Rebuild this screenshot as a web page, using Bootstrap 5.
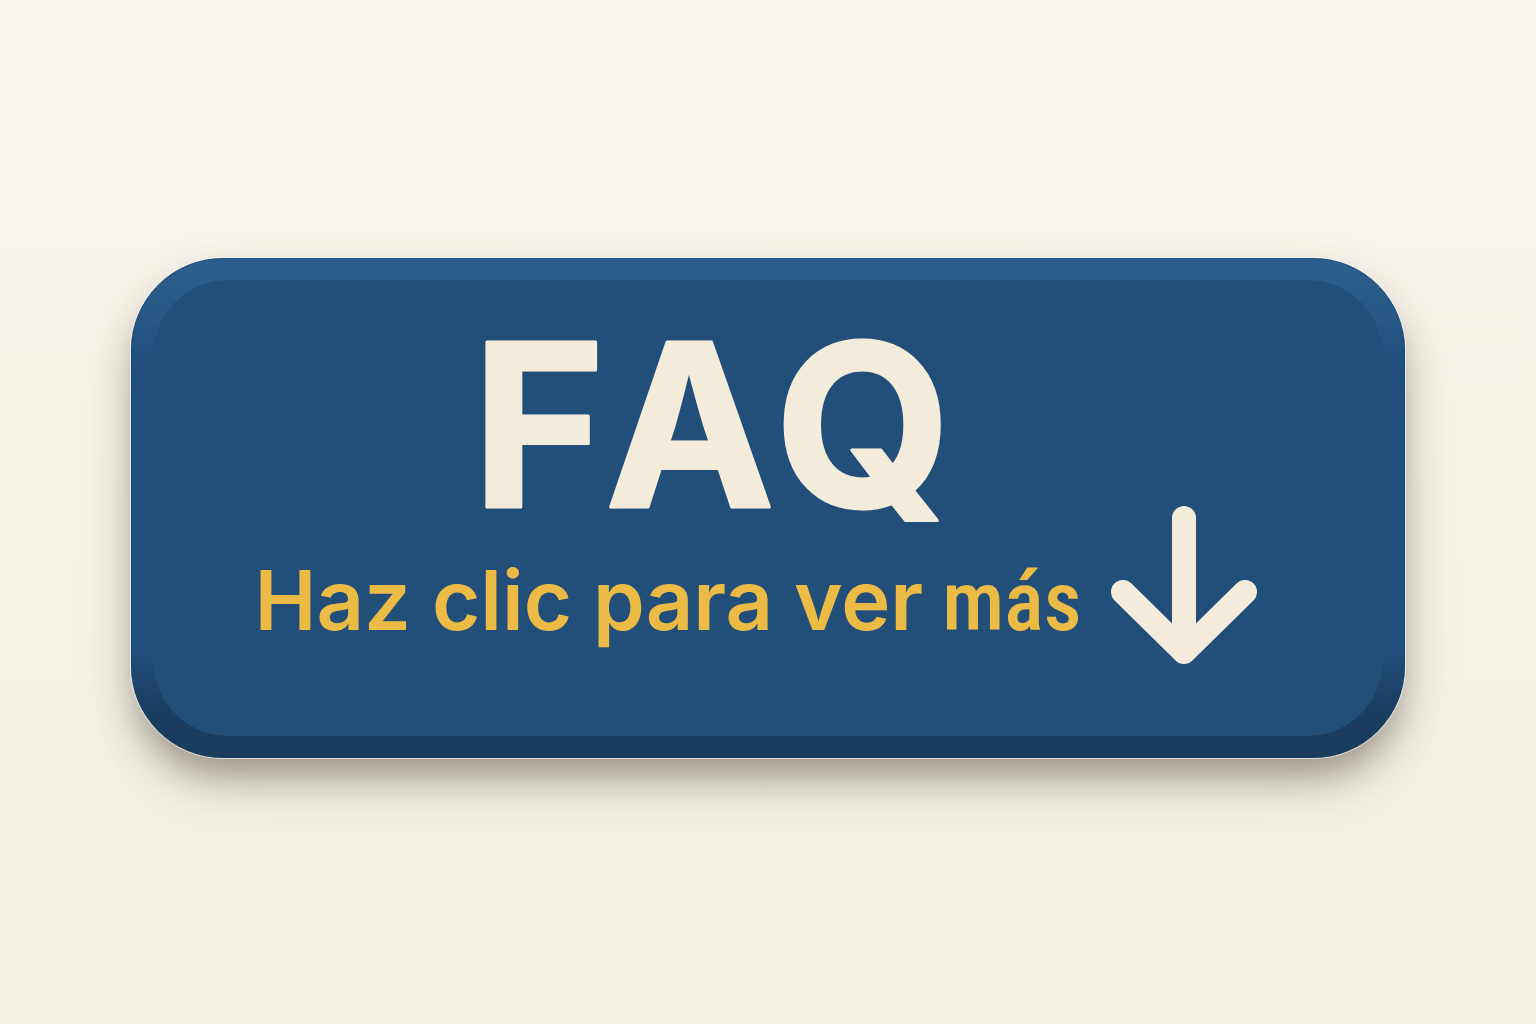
<!DOCTYPE html>
<html lang="es">
<head>
<meta charset="utf-8">
<meta name="viewport" content="width=device-width, initial-scale=1">
<title>FAQ</title>
<link href="https://cdn.jsdelivr.net/npm/bootstrap@5.3.0/dist/css/bootstrap.min.css" rel="stylesheet">
<style>
  body { background: linear-gradient(180deg, #f8f5ec 0%, #f5f2e8 60%, #f3f0e5 100%); }
  .faq-button {
    width: 83%;
    padding: 22px;
    border: 0;
    border-radius: 92px;
    background: linear-gradient(180deg, #2c5f8f 0, #2a5c8a 30px, #21507f 100px, #21507f calc(100% - 110px), #1b3d60 calc(100% - 50px), #1a3b5c 100%);
    box-shadow: inset 0 0 2px #0d3a68, 0 0 0 1px rgba(255, 250, 240, .7), 0 22px 36px -6px rgba(84, 72, 58, .5), 0 30px 60px rgba(110, 98, 80, .15);
    margin-bottom: 8px;
  }
  .faq-face {
    padding: 0 125px 70px 102px;
    border-radius: 76px;
    background: #214f79;
    font-family: Inter, "Liberation Sans", sans-serif;
  }
  .faq-copy { padding-bottom: 26px; }
  .faq-title { width: 500px; height: 282px; margin-left: 212px; }
  .faq-title text { font-size: 227px; font-weight: 700; font-kerning: none; fill: #f4ecdb; stroke: #f4ecdb; stroke-width: 3px; stroke-linejoin: round; }
  .faq-subtitle { font-size: 83px; line-height: 76px; font-weight: 600; color: #ecbb45; }
  .faq-narrow { font-family: "Roboto Condensed", "Arial Narrow", Roboto, sans-serif; font-weight: 500; }
  .faq-arrow { width: 148px; height: 160px; }
</style>
</head>
<body>
<main class="min-vh-100 d-flex align-items-center justify-content-center">
  <button type="button" class="faq-button">
    <span class="faq-face d-flex align-items-end justify-content-between">
      <span class="faq-copy d-flex flex-column text-start text-nowrap">
        <svg class="faq-title" viewBox="0 0 500 282"><text x="5" y="227">FAQ</text></svg>
        <span class="faq-subtitle">Haz clic para ver<span class="faq-narrow"> más</span></span>
      </span>
      <svg class="faq-arrow flex-shrink-0" viewBox="0 0 148 160" fill="none" stroke="#f4ecdb" stroke-width="24" stroke-linecap="round" stroke-linejoin="round" aria-hidden="true">
        <path d="M74 12V146M13 86L74 146L135 86"/>
      </svg>
    </span>
  </button>
</main>
<script src="https://cdn.jsdelivr.net/npm/bootstrap@5.3.0/dist/js/bootstrap.bundle.min.js"></script>
</body>
</html>
